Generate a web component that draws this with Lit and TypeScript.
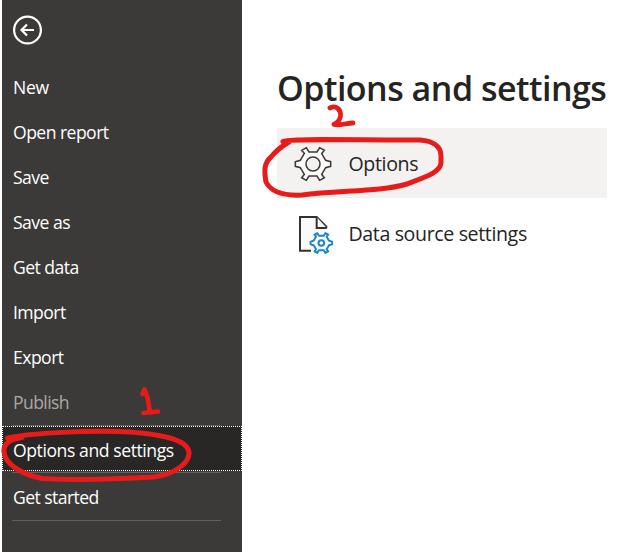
import { LitElement, html, css, svg } from "lit";
import { customElement } from "lit/decorators.js";
import { classMap } from "lit/directives/class-map.js";

interface MenuItem {
  label: string;
  cls: string;
}

const MENU: MenuItem[] = [
  { label: "New", cls: "new" },
  { label: "Open report", cls: "open" },
  { label: "Save", cls: "save" },
  { label: "Save as", cls: "saveas" },
  { label: "Get data", cls: "get" },
  { label: "Import", cls: "import" },
  { label: "Export", cls: "export" },
  { label: "Publish", cls: "disabled" },
];

// Six-toothed gear outline, centred on (0,0), 106 units across.
const GEAR =
  "M-53-7L-38-11L-26-32L-34-41L-20-49L-12-36H12L20-49L34-41L26-31L38-11L53-7V7L38 11L26 31L34 41L20 49L12 36H-12L-20 49L-34 41L-26 31L-38 11L-53 7Z";

@customElement("app-root")
export class AppRoot extends LitElement {
  static styles = css`
    :host {
      display: block;
      position: relative;
      width: 634px;
      height: 552px;
      overflow: hidden;
      background: #fff;
      font-family: "Open Sans", "Noto Sans", sans-serif;
    }
    .page {
      display: flex;
      height: 552px;
    }
    .sidebar {
      box-sizing: border-box;
      width: 240px;
      margin-left: 2px;
      background: #3b3a39;
      color: #fff;
      font-size: 17.6px;
      white-space: nowrap;
    }
    .back {
      height: 65px;
      padding: 15px 0 0 10px;
      box-sizing: border-box;
    }
    svg {
      display: block;
    }
    .item {
      box-sizing: border-box;
      height: 45px;
      line-height: 45px;
      padding-left: 11px;
      letter-spacing: -0.55px;
    }
    .new {
      letter-spacing: -0.35px;
    }
    .disabled {
      color: #aaa8a6;
      letter-spacing: -0.6px;
    }
    .rule {
      height: 1px;
      width: 209px;
      margin-left: 10px;
      background: #62605e;
    }
    .selected {
      line-height: 47px;
      background: #282726;
      border: 1px dotted #fff;
      padding-left: 10px;
      letter-spacing: -0.43px;
    }
    .after {
      margin-top: 1px;
    }
    .started {
      height: 47px;
      line-height: 49px;
      letter-spacing: -0.58px;
    }
    .content {
      width: 330px;
      margin-left: 35px;
      color: #252423;
      white-space: nowrap;
    }
    h1 {
      margin: 0;
      padding-top: 62px;
      height: 66px;
      line-height: 52px;
      font-size: 34px;
      font-weight: 600;
      letter-spacing: -0.5px;
    }
    .option {
      display: flex;
      align-items: center;
      height: 70px;
      padding-left: 12px;
      font-size: 19.6px;
      letter-spacing: -0.38px;
      line-height: 30px;
      box-sizing: border-box;
    }
    .option span {
      margin-left: -0.5px;
      padding-top: 2px;
    }
    .active {
      background: #f3f2f1;
    }
    .ink {
      position: absolute;
      left: 0;
      top: 0;
      pointer-events: none;
    }
  `;

  private optionsIcon() {
    return html`<svg width="60" height="60" viewBox="0 0 180 180" fill="#f9f9f9" stroke="#3b3a39" stroke-width="4.6">
      <path d=${GEAR} transform="translate(72 93)" />
      <circle cx="72" cy="93" r="21" fill="#f3f2f1" />
    </svg>`;
  }

  private sourceIcon() {
    return html`<svg width="60" height="60" viewBox="0 0 180 180" fill="#fafafa" stroke="#333" stroke-width="6">
      <path d="M66 143H33V42H83L112 71V76" />
      <path d="M83 42V75H113" />
      <g transform="translate(97 120) scale(.61)" stroke="#fff" stroke-width="20"><path d=${GEAR} /></g>
      <g stroke="#1e85c8">
        <path d=${GEAR} transform="translate(97 120) scale(.61)" stroke-width="9.500" stroke-linejoin="round" />
        <circle cx="97" cy="120" r="8.500" stroke-width="6" fill="#fff" />
      </g>
    </svg>`;
  }

  private ink() {
    const strokes = [
      { w: 5, d: "M7.500 438C13 436 18 438 22 437.500C11 439 3 443 4 452C5 464 21 474 42 478.500C70 480 120 479 154 477C176 474 190 462 189 452C187 440 166 435 130 432C90 430 30 433 7.500 438" },
      { w: 4.6, d: "M142.500 394L144.500 389.500C148 397 149 403 149.500 411M143.500 413L158 411.500" },
      { w: 4.8, d: "M330 108C336 105 341 109 340.500 116C340 120 337 123 334 124.500C340 126 346 123 353 123" },
      { w: 5, d: "M283 141.500C288 138 370 140.500 420 140C434 141 441 147 441 156V163C440 172 428 176 407 184C380 192 340 190 302 195C283 196 271 192 266 182C264 171 264 163 271 157C276 151 282 146 289 142" },
    ];
    return html`<svg class="ink" width="634" height="552" fill="none" stroke="#e81b1b" stroke-linecap="round" stroke-linejoin="round">
      ${strokes.map((s) => svg`<path d=${s.d} stroke-width=${s.w} />`)}
    </svg>`;
  }

  render() {
    return html`
      <div class="page">
        <nav class="sidebar">
          <div class="back">
            <svg width="30" height="30" viewBox="0 0 30 30" fill="none" stroke="#fff" stroke-width="2.200">
              <circle cx="15.500" cy="15" r="13.400" />
              <path d="M9.500 15H22M15 9.500L9.500 15L15 20.500" />
            </svg>
          </div>
          ${MENU.map((m) => html`<div class="item ${classMap({ [m.cls]: true })}">${m.label}</div>`)}
          <div class="rule"></div>
          <div class="item selected">Options and settings</div>
          <div class="rule after"></div>
          <div class="item started">Get started</div>
          <div class="rule"></div>
        </nav>
        <main class="content">
          <h1>Options and settings</h1>
          <div class="option active">${this.optionsIcon()}<span>Options</span></div>
          <div class="option">${this.sourceIcon()}<span>Data source settings</span></div>
        </main>
      </div>
      ${this.ink()}
    `;
  }
}
